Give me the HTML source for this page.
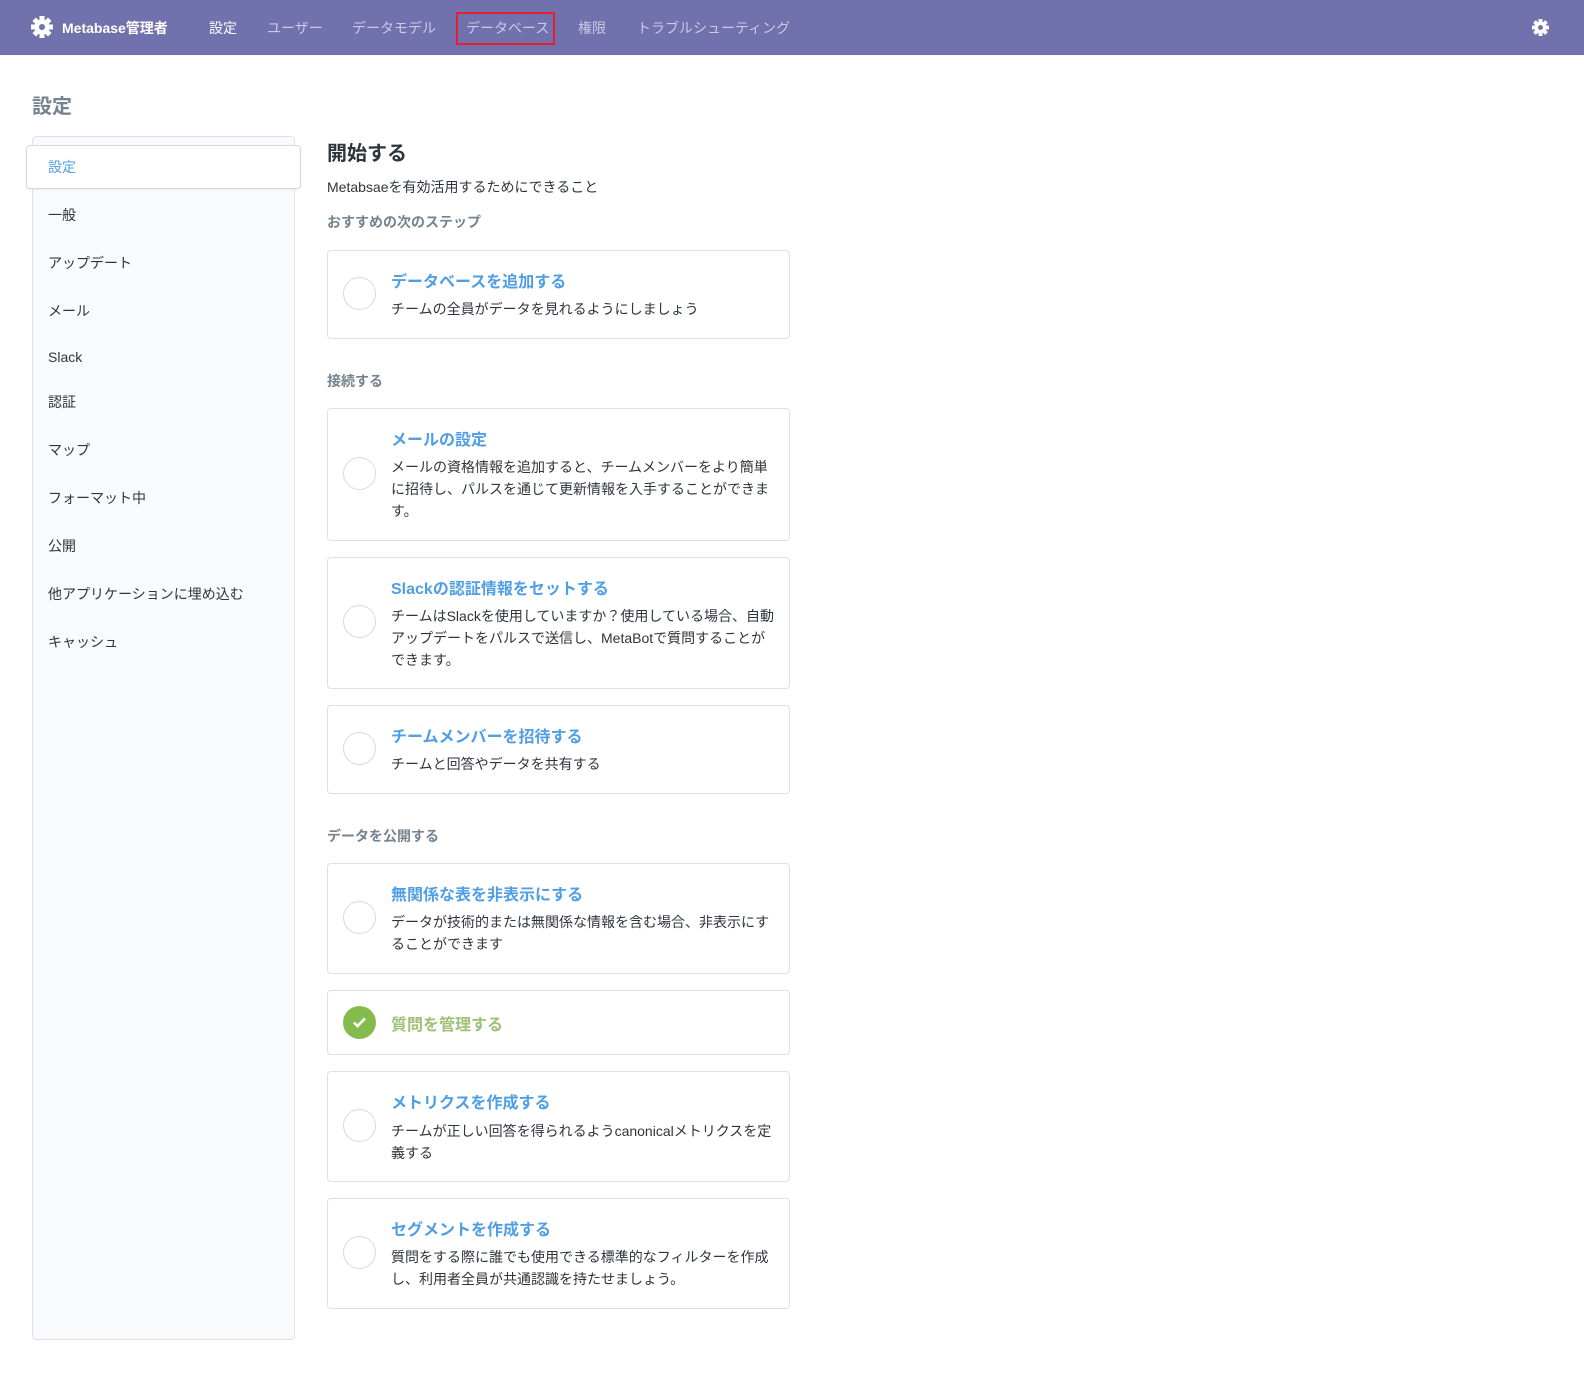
<!DOCTYPE html>
<html><head><meta charset="utf-8"><style>
*{margin:0;padding:0;box-sizing:border-box}
body{width:1584px;height:1386px;background:#fff;font-family:"Liberation Sans","Noto Sans CJK JP",sans-serif;color:#2e353b;position:relative;overflow:hidden}
.a{position:absolute;white-space:nowrap}
.hdr{position:absolute;left:0;top:0;width:1584px;height:55px;background:#7172ad}
.nav{position:absolute;top:18px;font-size:14px;color:#c9c9e6}
.side{position:absolute;left:32px;top:136px;width:263px;height:1204px;background:#f9fafc;border:1px solid #dfe3e8;border-radius:4px}
.act{position:absolute;left:26px;top:145px;width:275px;height:44px;background:#fff;border:1px solid #d5d9de;border-radius:4px;box-shadow:0 1px 2px rgba(0,0,0,.06)}
.si{position:absolute;left:48px;font-size:14px;color:#2e353b}
.card{position:absolute;left:327px;width:463px;border:1px solid #dde1e5;border-radius:4px;background:#fff}
.circ{position:absolute;left:343px;width:33px;height:33px;border:1.5px solid #d6dbe0;border-radius:50%}
.t{position:absolute;left:391px;font-size:16px;font-weight:bold;color:#509ee3;white-space:nowrap}
.d{position:absolute;left:391px;font-size:14px;line-height:22px;color:#2e353b;white-space:nowrap}
.sec{position:absolute;left:327px;font-size:14px;font-weight:bold;color:#74838f}
</style></head><body>
<div class="hdr"></div>
<svg class="a" style="left:31px;top:16px" width="22" height="22" viewBox="-11 -11 22 22"><g fill="#fff"><circle r="7.5"/><rect x="-2.5" y="-11" width="5" height="22"/><rect x="-11" y="-2.5" width="22" height="5"/><rect x="-2.5" y="-11" width="5" height="22" transform="rotate(45)"/><rect x="-2.5" y="-11" width="5" height="22" transform="rotate(-45)"/></g><circle r="3" fill="#7172ad"/></svg>
<div class="a" style="left:62px;top:18px;font-size:14px;font-weight:bold;color:#fff">Metabase管理者</div>
<div class="nav a" style="left:209px;color:#fff">設定</div>
<div class="nav a" style="left:267px">ユーザー</div>
<div class="nav a" style="left:352px">データモデル</div>
<div class="a" style="left:456px;top:12px;width:99px;height:33px;border:2px solid #e4202a"></div>
<div class="nav a" style="left:466px">データベース</div>
<div class="nav a" style="left:578px">権限</div>
<div class="nav a" style="left:637px">トラブルシューティング</div>
<svg class="a" style="left:1532px;top:19px" width="17" height="17" viewBox="-11 -11 22 22"><g fill="#fff"><circle r="7.5"/><rect x="-2.5" y="-11" width="5" height="22"/><rect x="-11" y="-2.5" width="22" height="5"/><rect x="-2.5" y="-11" width="5" height="22" transform="rotate(45)"/><rect x="-2.5" y="-11" width="5" height="22" transform="rotate(-45)"/></g><circle r="3.2" fill="#7172ad"/></svg>

<div class="a" style="left:32px;top:90px;font-size:20px;font-weight:bold;color:#74838f">設定</div>
<div class="side"></div>
<div class="act"></div>
<div class="si a" style="top:157px;color:#509ee3">設定</div>
<div class="si a" style="top:205px">一般</div>
<div class="si a" style="top:253px">アップデート</div>
<div class="si a" style="top:301px">メール</div>
<div class="si a" style="top:349px">Slack</div>
<div class="si a" style="top:392px">認証</div>
<div class="si a" style="top:440px">マップ</div>
<div class="si a" style="top:488px">フォーマット中</div>
<div class="si a" style="top:536px">公開</div>
<div class="si a" style="top:584px">他アプリケーションに埋め込む</div>
<div class="si a" style="top:632px">キャッシュ</div>

<div class="a" style="left:327px;top:137px;font-size:20px;font-weight:bold;color:#2e353b">開始する</div>
<div class="a" style="left:327px;top:177px;font-size:14px">Metabsaeを有効活用するためにできること</div>
<div class="sec a" style="top:212px">おすすめの次のステップ</div>

<div class="card" style="top:250px;height:89px"></div>
<div class="circ" style="top:277px"></div>
<div class="t" style="top:268px">データベースを追加する</div>
<div class="d" style="top:298px">チームの全員がデータを見れるようにしましょう</div>

<div class="sec a" style="top:371px">接続する</div>
<div class="card" style="top:408px;height:133px"></div>
<div class="circ" style="top:457px"></div>
<div class="t" style="top:426px">メールの設定</div>
<div class="d" style="top:456px">メールの資格情報を追加すると、チームメンバーをより簡単<br>に招待し、パルスを通じて更新情報を入手することができま<br>す。</div>

<div class="card" style="top:557px;height:132px"></div>
<div class="circ" style="top:605px"></div>
<div class="t" style="top:575px">Slackの認証情報をセットする</div>
<div class="d" style="top:605px">チームはSlackを使用していますか？使用している場合、自動<br>アップデートをパルスで送信し、MetaBotで質問することが<br>できます。</div>

<div class="card" style="top:705px;height:89px"></div>
<div class="circ" style="top:732px"></div>
<div class="t" style="top:723px">チームメンバーを招待する</div>
<div class="d" style="top:753px">チームと回答やデータを共有する</div>

<div class="sec a" style="top:826px">データを公開する</div>
<div class="card" style="top:863px;height:111px"></div>
<div class="circ" style="top:901px"></div>
<div class="t" style="top:881px">無関係な表を非表示にする</div>
<div class="d" style="top:911px">データが技術的または無関係な情報を含む場合、非表示にす<br>ることができます</div>

<div class="card" style="top:990px;height:65px"></div>
<div class="a" style="left:343px;top:1006px;width:33px;height:33px;border-radius:50%;background:#84bb4c"></div>
<svg class="a" style="left:351px;top:1015px" width="17" height="15" viewBox="0 0 17 15"><path d="M3 7.5l3.5 3.5 7.5-7.5" fill="none" stroke="#fff" stroke-width="2.6"/></svg>
<div class="t" style="top:1011px;color:#9cc177">質問を管理する</div>

<div class="card" style="top:1071px;height:111px"></div>
<div class="circ" style="top:1109px"></div>
<div class="t" style="top:1089px">メトリクスを作成する</div>
<div class="d" style="top:1120px">チームが正しい回答を得られるようcanonicalメトリクスを定<br>義する</div>

<div class="card" style="top:1198px;height:111px"></div>
<div class="circ" style="top:1236px"></div>
<div class="t" style="top:1216px">セグメントを作成する</div>
<div class="d" style="top:1246px">質問をする際に誰でも使用できる標準的なフィルターを作成<br>し、利用者全員が共通認識を持たせましょう。</div>
</body></html>
